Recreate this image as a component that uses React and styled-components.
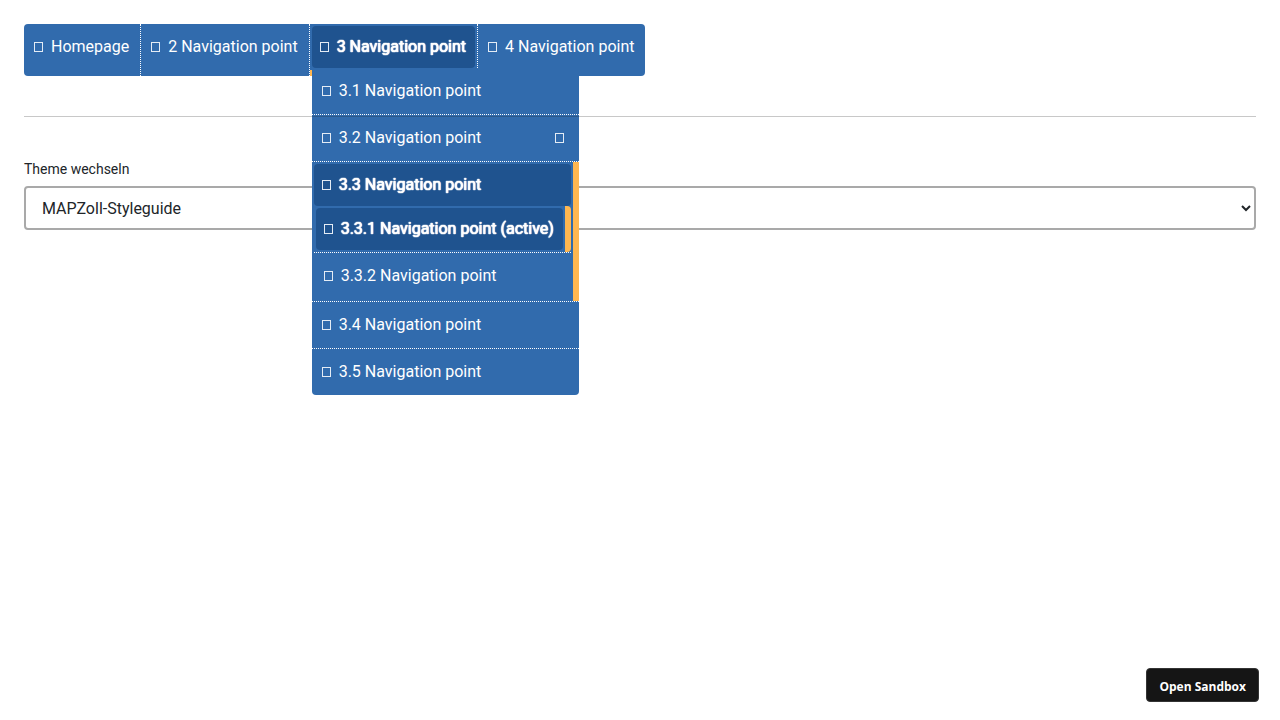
import React from "react";
import styled, { createGlobalStyle, css } from "styled-components";

const GlobalStyle = createGlobalStyle`
  *, *::before, *::after { box-sizing: border-box; }
  body {
    margin: 0;
    background: #fff;
    color: #212529;
    font: 400 16px/24px Roboto, "Liberation Sans", sans-serif;
  }
`;

const Page = styled.main`
  min-height: 100vh;
  padding: 24px;
`;

const NavBar = styled.nav`
  display: flex;
`;

const TopList = styled.ul`
  display: flex;
  margin: 0;
  padding: 0;
  list-style: none;
  background: #316bad;
  border-radius: 4px;
`;

const TopItem = styled.li`
  position: relative;
  padding: 2px;
  border-right: 1px dotted #fff;
  ${(p) => p.$active && css`border-bottom: 6px solid #ffb750;`}
  &:last-child { border-right: 0; }
`;

const NavLink = styled.a`
  display: flex;
  align-items: center;
  height: 42px;
  padding: 0 9px 0 8px;
  border-radius: 4px;
  color: #fff;
  text-decoration: none;
  white-space: nowrap;
  ${(p) =>
    p.$active &&
    css`
      background: #1f538f;
      text-shadow: 0 0 1px #fff, 0 0 1px #fff, 0 0 1px #fff;
    `}
`;

const Glyph = styled.span`
  width: 9px;
  height: 10px;
  margin: ${(p) => (p.$trailing ? "0 4px 0 auto" : "0 8px 0 0")};
  border: 1px solid #e4ecf5;
`;

const SubMenu = styled.ul`
  position: absolute;
  top: 44px;
  left: 2px;
  margin: 0;
  padding: 0;
  list-style: none;
  background: #316bad;
  border-radius: 0 0 4px 4px;
`;

const SubItem = styled.li`
  padding: 2px;
  & + & { border-top: 1px dotted #fff; }
`;

const Marked = styled.div`
  margin: -2px;
  padding: 2px;
  border-right: 6px solid #ffb750;
  ${(p) => p.$rounded && css`border-radius: 0 4px 4px 0;`}
`;

const NestedList = styled.ul`
  margin: 0;
  padding: 0;
  list-style: none;
`;

const Divider = styled.hr`
  height: 1px;
  margin: 40px 0;
  border: 0;
  background: #222;
  opacity: 0.25;
`;

const Field = styled.div`
  display: flex;
  flex-direction: column;
`;

const Label = styled.label`
  margin-bottom: 5px;
  font-size: 14px;
`;

const Select = styled.select`
  width: 100%;
  height: 44px;
  padding: 0 12px;
  border: 2px solid #a9a9a9;
  border-radius: 4px;
  background: #fff;
  color: #212529;
  font: inherit;
`;

const SandboxButton = styled.button`
  position: fixed;
  right: 21px;
  bottom: 18px;
  height: 34px;
  padding: 4px 12px 0;
  border: 1px solid #343434;
  border-radius: 4px;
  background: #151515;
  color: #fff;
  font: 700 12px/16px "Open Sans", "Noto Sans", sans-serif;
`;

function Entry({ label, active, more }) {
  return (
    <NavLink href="#" $active={active} aria-current={active ? "true" : undefined}>
      <Glyph aria-hidden="true" />
      {label}
      {more && <Glyph $trailing aria-hidden="true" />}
    </NavLink>
  );
}

export default function App() {
  return (
    <>
      <GlobalStyle />
      <Page>
        <NavBar>
          <TopList>
            <TopItem><Entry label="Homepage" /></TopItem>
            <TopItem><Entry label="2 Navigation point" /></TopItem>
            <TopItem $active>
              <Entry label="3 Navigation point" active />
              <SubMenu>
                <SubItem><Entry label="3.1 Navigation point" /></SubItem>
                <SubItem><Entry label="3.2 Navigation point" more /></SubItem>
                <SubItem>
                  <Marked>
                    <Entry label="3.3 Navigation point" active />
                    <NestedList>
                      <SubItem>
                        <Marked $rounded>
                          <Entry label="3.3.1 Navigation point (active)" active />
                        </Marked>
                      </SubItem>
                      <SubItem><Entry label="3.3.2 Navigation point" /></SubItem>
                    </NestedList>
                  </Marked>
                </SubItem>
                <SubItem><Entry label="3.4 Navigation point" /></SubItem>
                <SubItem><Entry label="3.5 Navigation point" /></SubItem>
              </SubMenu>
            </TopItem>
            <TopItem><Entry label="4 Navigation point" /></TopItem>
          </TopList>
        </NavBar>
        <Divider />
        <Field>
          <Label htmlFor="theme">Theme wechseln</Label>
          <Select id="theme" defaultValue="styleguide">
            <option value="styleguide">MAPZoll-Styleguide</option>
          </Select>
        </Field>
      </Page>
      <SandboxButton type="button">Open Sandbox</SandboxButton>
    </>
  );
}
